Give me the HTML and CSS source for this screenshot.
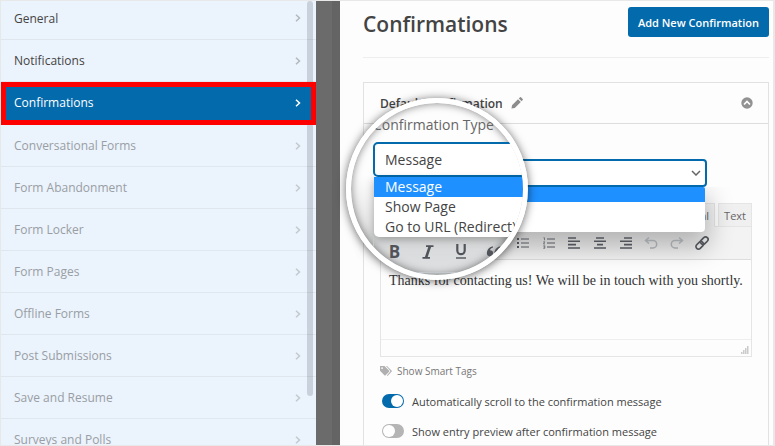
FILE: index.html
```
<!DOCTYPE html>
<html lang="en">
	<head>
		<meta charset="utf-8">
		<title>Confirmations</title>
		<link rel="stylesheet" href="styles.css">
	</head>
	<body>
		<svg class="defs" aria-hidden="true">
			<symbol id="chev" viewBox="0 0 6 8"><path d="M1 .7 4.5 4 1 7.300" fill="none" stroke="currentColor" stroke-width="1.500"/></symbol>
		</svg>
		<div class="page">
			<nav class="sidebar">
				<a href="#" class="item">General <svg class="chev"><use href="#chev"/></svg></a>
				<a href="#" class="item">Notifications <svg class="chev"><use href="#chev"/></svg></a>
				<a href="#" class="item active">Confirmations <svg class="chev"><use href="#chev"/></svg></a>
				<a href="#" class="item off">Conversational Forms <svg class="chev"><use href="#chev"/></svg></a>
				<a href="#" class="item off">Form Abandonment <svg class="chev"><use href="#chev"/></svg></a>
				<a href="#" class="item off">Form Locker <svg class="chev"><use href="#chev"/></svg></a>
				<a href="#" class="item off">Form Pages <svg class="chev"><use href="#chev"/></svg></a>
				<a href="#" class="item off">Offline Forms <svg class="chev"><use href="#chev"/></svg></a>
				<a href="#" class="item off">Post Submissions <svg class="chev"><use href="#chev"/></svg></a>
				<a href="#" class="item off">Save and Resume <svg class="chev"><use href="#chev"/></svg></a>
				<a href="#" class="item off">Surveys and Polls <svg class="chev"><use href="#chev"/></svg></a>
				<div class="scrollbar"></div>
			</nav>
			<div class="gutter"></div>
			<main class="main">
				<header class="main-header">
					<h1>Confirmations</h1>
					<button class="add">Add New Confirmation</button>
				</header>
				<section class="card">
					<div class="card-header">
						<h2>Default Confirmation</h2>
						<button class="icon-button" title="Edit name">
							<svg width="12" height="12" viewBox="0 0 12 12"><path d="M1 8.200 7 2.200 9.800 5 3.800 11 .5 11.500zM7.800 1.400 9 .3q.5-.4 1 0L11.700 2q.4.5 0 1L10.600 4.200z" fill="#8d8d8d"/></svg>
						</button>
						<button class="icon-button toggle-card" title="Collapse">
							<svg width="12" height="12" viewBox="0 0 12 12"><circle cx="6" cy="6" r="5.700" fill="#929292"/><path d="M3 7.500 6 4.500 9 7.500" fill="none" stroke="#fff" stroke-width="1.700"/></svg>
						</button>
					</div>
					<div class="card-body">
						<div class="field">
							<div class="select-wrap">
								<select id="type" aria-label="Confirmation Type"></select>
								<svg class="arrow" width="10" height="6" viewBox="0 0 10 6"><path d="M1 1 5 5 9 1" fill="none" stroke="#666" stroke-width="1.500"/></svg>
							</div>
							<div class="options"></div>
							<div class="lens">
								<label for="lens-type">Confirmation Type</label>
								<select id="lens-type">
									<option>Message</option>
								</select>
								<ul class="lens-options">
									<li class="selected">Message</li>
									<li>Show Page</li>
									<li>Go to URL (Redirect)</li>
								</ul>
								<div class="lens-tools">
									<button title="Bold"><b>B</b></button>
									<button title="Italic"><svg width="12" height="14" viewBox="0 0 12 14"><path d="M4 1.200h7.500M.5 12.800H8" stroke="currentColor" stroke-width="1.800"/><path d="M8 1 4 13" stroke="currentColor" stroke-width="2.600"/></svg></button>
									<button title="Underline"><svg width="12" height="15" viewBox="0 0 12 15"><path d="M2.300 0v6.500a3.700 3.700 0 0 0 7.400 0V0" fill="none" stroke="currentColor" stroke-width="2.200"/><path d="M1 14h10" stroke="currentColor" stroke-width="1.400"/></svg></button>
									<button title="Quote"><svg width="16" height="13" viewBox="0 0 18 14"><path d="M7.500 1C3.500 2 1 5 1 9a3.500 3.500 0 1 0 3.500-3.500C5 4 6 3 8 2.500zM16 1c-4 1-6.500 4-6.500 8A3.500 3.500 0 1 0 13 5.500c.5-1.500 1.500-2.500 3.500-3z" fill="currentColor"/></svg></button>
								</div>
							</div>
						</div>
						<div class="tabs">
							<button class="tab current">Visual</button>
							<button class="tab">Text</button>
						</div>
						<div class="editor">
							<div class="toolbar">
								<button title="Bulleted list"><svg width="12" height="12" viewBox="0 0 12 12"><path d="M4 2h8M4 6h8M4 10h8" stroke="currentColor"/><path d="M0 2h2M0 6h2M0 10h2" stroke="currentColor" stroke-width="2"/></svg></button>
								<button title="Numbered list"><svg width="12" height="12" viewBox="0 0 12 12"><path d="M4 2h8M4 6h8M4 10h8" stroke="currentColor"/><path d="M.5.800h1v2.500M.3 4.800h1.400L.5 7h1.500M.3 8.800h1.500v2.500H.3M.6 10h1" fill="none" stroke="currentColor" stroke-width=".7"/></svg></button>
								<button title="Align left"><svg width="12" height="12" viewBox="0 0 12 12"><path d="M0 1h8M0 4.300h12M0 7.600h8M0 11h12" stroke="currentColor" stroke-width="1.600"/></svg></button>
								<button title="Align center"><svg width="12" height="12" viewBox="0 0 12 12"><path d="M2 1h8M0 4.300h12M3 7.600h6M0 11h12" stroke="currentColor" stroke-width="1.600"/></svg></button>
								<button title="Align right"><svg width="12" height="12" viewBox="0 0 12 12"><path d="M4 1h8M0 4.300h12M4 7.600h8M0 11h12" stroke="currentColor" stroke-width="1.600"/></svg></button>
								<button title="Undo" disabled><svg width="14" height="12" viewBox="0 0 14 12"><path d="M5 .5 1.500 3.500 5 6.500M1.500 3.500H9a3.600 3.600 0 0 1 0 7.400H6" fill="none" stroke="currentColor" stroke-width="1.500"/></svg></button>
								<button title="Redo" disabled><svg width="14" height="12" viewBox="0 0 14 12"><path d="M9 .5 12.500 3.500 9 6.500M12.500 3.500H5a3.600 3.600 0 0 0 0 7.400h3" fill="none" stroke="currentColor" stroke-width="1.500"/></svg></button>
								<button title="Insert link"><svg width="14" height="14" viewBox="0 0 14 14"><g fill="none" stroke="currentColor" stroke-width="1.700" transform="rotate(-45 7 7)"><rect x="-.5" y="4.500" width="8.500" height="5" rx="2.500"/><rect x="6" y="4.500" width="8.500" height="5" rx="2.500"/></g></svg></button>
							</div>
							<textarea class="message" aria-label="Confirmation message">Thanks for contacting us! We will be in touch with you shortly.</textarea>
							<div class="statusbar">
								<svg width="8" height="8" viewBox="0 0 8 8"><path d="M6 1h1.500M4 3h1.500M6 3h1.500M2 5h1.500M4 5h1.500M6 5h1.500M0 7h1.500M2 7h1.500M4 7h1.500M6 7h1.500" stroke="#999"/></svg>
							</div>
						</div>
						<a href="#" class="tags">
							<svg width="12" height="10" viewBox="0 0 12 10"><path fill-rule="evenodd" d="M0 0h4.500L9 4.600q.6.600 0 1.200L5.600 9.300q-.6.600-1.200 0L0 4.800zm2 1.200a.9.900 0 1 0 .1 0z" fill="#b0b0b0"/><path d="M6 0h1l4.500 4.600q.6.600 0 1.200L8 9.400q-.6.600-1.200.1L10 5.800q.5-.6 0-1.200z" fill="#b0b0b0"/></svg>
							Show Smart Tags
						</a>
						<label class="switch"><input type="checkbox" checked> Automatically scroll to the confirmation message</label>
						<label class="switch"><input type="checkbox"> Show entry preview after confirmation message</label>
					</div>
				</section>
			</main>
		</div>
	</body>
</html>
```
FILE: styles.css
```
*{
	box-sizing: border-box;
}

body{
	margin: 0;
	font-family: "Open Sans", "Noto Sans", sans-serif;
	font-size: 12px;
	color: #444;
}

h1, h2, ul{
	margin: 0;
	padding: 0;
}

ul{
	list-style: none;
}

button, select, textarea{
	font: inherit;
	color: inherit;
}

button{
	cursor: pointer;
}

.defs{
	display: none;
}

.page{
	display: flex;
	height: 100vh;
	border: 1px solid #e8e8e8;
	border-right-width: 2px;
	overflow: hidden;
}

/* sidebar */
.sidebar{
	position: relative;
	flex: 0 1 315px;
	background: #ebf3fc;
	overflow: hidden;
}

.item{
	display: flex;
	align-items: center;
	justify-content: space-between;
	height: 42px;
	padding: 0 15px 0 13px;
	border-bottom: 1px solid #dfe6ee;
	color: #444;
	text-decoration: none;
}

.item:first-child{
	height: 39px;
	padding-bottom: 4px;
}

.chev{
	width: 6px;
	height: 8px;
	color: #b2b8be;
}

.off{
	color: #999ea4;
}

.off .chev{
	color: #c3c9cf;
}

.active{
	position: relative;
	z-index: 1;
	height: 43px;
	padding: 0 10px 2px 8px;
	border: 5px solid #f00;
	background: #036aab;
	color: #fff;
}

.active .chev{
	color: #fff;
}

.scrollbar{
	position: absolute;
	top: 0;
	right: 3px;
	width: 6px;
	height: 89%;
	border-radius: 3px;
	background: rgba(0, 20, 40, 0.15);
}

.gutter{
	flex: 0 0 24px;
	background: #6b6b6b;
	border-right: 8px solid #646464;
}

/* main column */
.main{
	flex: 1;
	min-width: 0;
	padding: 6px 4px 0 23px;
	background: #fdfdfd;
}

.main-header{
	display: flex;
	justify-content: space-between;
	align-items: flex-start;
	padding-bottom: 16px;
	border-bottom: 1px solid #eee;
}

h1{
	font-size: 21px;
	line-height: 34px;
	font-weight: 600;
}

.add{
	height: 30px;
	padding: 0 10px;
	border: none;
	border-radius: 3px;
	background: #036aab;
	color: #fff;
	font-size: 11px;
	font-weight: 600;
}

.card{
	height: 100%;
	margin-top: 24px;
	border: 1px solid #e2e2e2;
}

.card-header{
	display: flex;
	align-items: center;
	gap: 8px;
	height: 41px;
	padding: 0 15px 0 16px;
	border-bottom: 1px solid #ddd;
}

h2{
	font-size: 12px;
	font-weight: 600;
}

.icon-button{
	display: flex;
	padding: 0;
	border: none;
	background: none;
}

.toggle-card{
	margin-left: auto;
}

.card-body{
	padding: 35px 16px 0;
}

.field{
	position: relative;
	margin-bottom: 16px;
}

.select-wrap{
	position: relative;
	margin-right: 45px;
}

#type{
	display: block;
	width: 100%;
	height: 28px;
	padding: 0 8px;
	border: 2px solid #036aab;
	border-radius: 4px;
	background: #fff;
	appearance: none;
}

.arrow{
	position: absolute;
	top: 11px;
	right: 6px;
}

.options{
	position: absolute;
	z-index: 1;
	top: 28px;
	left: 0;
	right: 47px;
	height: 45px;
	border-top: 15px solid #1e90ff;
	border-radius: 2px 2px 4px 4px;
	background: #fff;
	box-shadow: 0 12px 24px 4px rgba(0, 0, 0, 0.25);
	clip-path: inset(0 -30px -40px -30px);
}

.selected{
	background: #1e90ff;
	color: #fff;
}

/* magnified area over the select */
.lens{
	position: absolute;
	z-index: 2;
	top: -61px;
	left: -34px;
	width: 182px;
	height: 182px;
	padding: 13px 0 0 22px;
	border: 5px solid #fff;
	border-radius: 50%;
	background: linear-gradient(#fdfdfd 42%, #e9e9e9 65%, #d9dadb 84%, #dfe1e2);
	box-shadow: 0 1px 10px rgba(0, 0, 0, 0.6), inset 0 0 9px rgba(0, 0, 0, 0.5);
	overflow: hidden;
	font-size: 14px;
	white-space: nowrap;
}

.lens label{
	display: block;
	line-height: 18px;
	margin-bottom: 8px;
	color: #666;
}

.lens select{
	display: block;
	width: 200px;
	height: 35px;
	padding: 0 10px;
	border: 2px solid #036aab;
	border-radius: 5px;
	background: #fff;
	appearance: none;
}

.lens-options{
	width: 200px;
	margin-left: 1px;
	border-radius: 0 0 0 5px;
	background: #fff;
	line-height: 20px;
	box-shadow: 0 3px 8px rgba(0, 0, 0, 0.3);
}

.lens-options li{
	padding-left: 11px;
}

.lens-tools{
	display: grid;
	grid-template-columns: repeat(4, 33px);
	height: 36px;
	padding: 0 0 6px 4px;
	border-left: 1px solid #c4c6c8;
	border-bottom: 1px solid #c4c8cc;
	color: #50545a;
	font-size: 17px;
}

.lens-tools button,
.toolbar button{
	display: flex;
	align-items: center;
	justify-content: center;
	padding: 0;
	border: none;
	background: none;
}

/* editor */
.tabs{
	display: flex;
	justify-content: flex-end;
	gap: 3px;
}

.tab{
	height: 24px;
	margin-bottom: -1px;
	padding: 0 5px;
	border: 1px solid #e5e5e5;
	background: #f0f0f0;
	color: #666;
	font-size: 11px;
}

.current{
	border-bottom-color: #f3f3f3;
	background: #f3f3f3;
}

.editor{
	border: 1px solid #e5e5e5;
}

.toolbar{
	display: flex;
	height: 33px;
	padding: 0 36px 0 35%;
	border-bottom: 1px solid #ddd;
	background: #f3f3f3;
}

.toolbar button{
	position: relative;
	z-index: 1;
	flex: 1;
	color: #50545a;
}

.toolbar button:disabled{
	color: #a0a3a6;
}

.message{
	display: block;
	width: 100%;
	height: 79px;
	padding: 13px 8px;
	border: none;
	resize: none;
	background: #fdfdfd;
	font-family: "Liberation Serif", serif;
	font-size: 14px;
	line-height: 16px;
	color: #333;
}

.statusbar{
	display: flex;
	justify-content: flex-end;
	align-items: flex-end;
	height: 17px;
	padding: 2px;
	border-top: 1px solid #eee;
}

.tags{
	display: flex;
	align-items: center;
	gap: 5px;
	margin-top: 6px;
	line-height: 16px;
	font-size: 10px;
	color: #777;
	text-decoration: none;
}

.switch{
	display: flex;
	align-items: center;
	gap: 8px;
	height: 30px;
	padding-left: 2px;
	font-size: 11px;
}

.tags + .switch{
	margin-top: 7px;
}

.switch input{
	appearance: none;
	width: 22px;
	height: 14px;
	margin: 0;
	border-radius: 7px;
	background: #b5b5b5;
}

.switch input::before{
	content: "";
	display: block;
	width: 12px;
	height: 12px;
	margin: 1px;
	border-radius: 50%;
	background: #fff;
}

.switch input:checked{
	background: #036aab;
}

.switch input:checked::before{
	margin-left: 9px;
}
```
